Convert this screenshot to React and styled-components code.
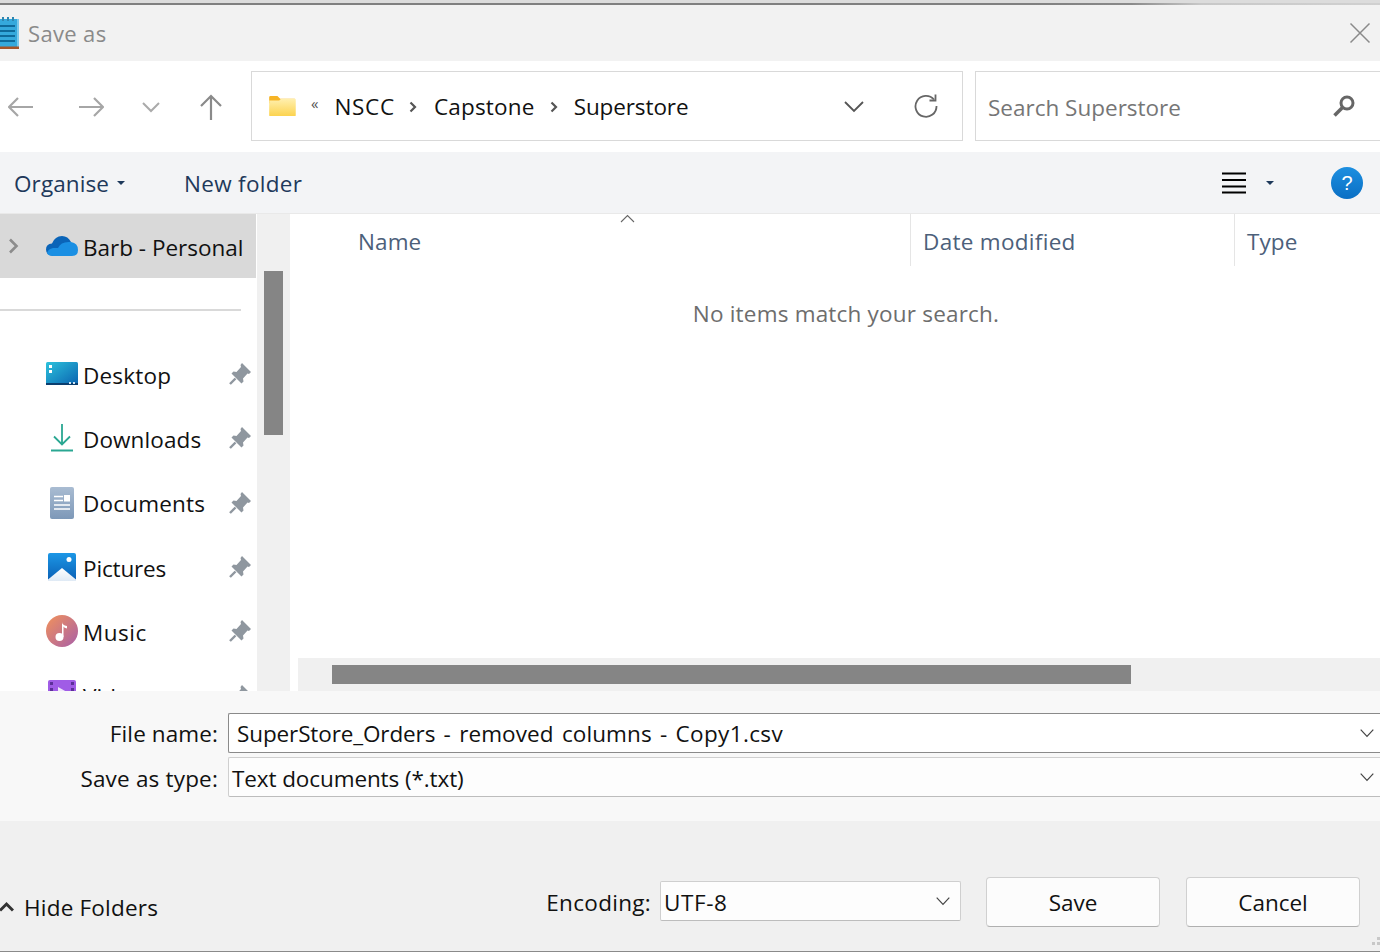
import React from 'react';
import styled, { createGlobalStyle } from 'styled-components';

const Global = createGlobalStyle`
  html, body { margin: 0; padding: 0; background: #fff; }
  body { font-family: "Open Sans", "Noto Sans", sans-serif; color: #111; }
  * { box-sizing: border-box; }
`;

const Dialog = styled.div`
  width: 1380px; height: 952px; overflow: hidden; display: grid;
  grid-template-rows: 5px 56px 91px 62px 477px 130px 131px;
`;
const TopEdge = styled.div`
  background: linear-gradient(#dcdcdc 0 3px, transparent 3px),
    linear-gradient(90deg, #808080 0 75%, #8a8a8a 82%, #c8c8c8 87%, #d0d0d0 100%);
`;
const TitleBar = styled.div`
  background: #f2f2f2; display: flex; align-items: center; justify-content: space-between;
  padding: 0 8px 0 0;
`;
const TitleGroup = styled.div`display: flex; align-items: center; gap: 8px;`;
const TitleText = styled.span`font-size: 22px; color: #8a8a8a; letter-spacing: 0.35px;`;

const NavBar = styled.div`
  background: #fff; display: flex; align-items: center; padding: 0 0 1px 0;
`;
const NavButtons = styled.div`width: 251px; flex: none; display: flex; align-items: center; padding: 2px 0 0 8px;`;
const NavSlot = styled.span`display: flex; width: ${p => p.$w}px; flex: none;`;
const AddressBox = styled.div`
  width: 712px; height: 70px; flex: none; border: 1px solid #d9d9d9; display: flex; align-items: center;
  padding: 0 24px 0 16px;
`;
const Crumbs = styled.div`flex: 1; display: flex; align-items: center;`;
const Crumb = styled.span`font-size: 22.5px; color: #111; letter-spacing: ${p => p.$ls}px;`;
const CrumbSep = styled.span`display: flex; margin: 2px ${p => p.$r}px 0 ${p => p.$l}px;`;
const Back = styled.span`font-size: 15px; color: #555; margin: -6px 16px 0 15px; line-height: 1;`;
const AddrChevron = styled.span`display: flex; margin-top: 1px;`;
const SearchBox = styled.div`
  margin-left: 12px; flex: 1; height: 70px; border: 1px solid #d9d9d9; border-right: 0; display: flex; align-items: center;
  justify-content: space-between; padding: 0 24px 0 12px;
`;
const SearchText = styled.span`font-size: 22.5px; color: #767676; letter-spacing: 0; padding-top: 2px;`;

const ToolBar = styled.div`
  background: #f3f4f6; border-bottom: 1px solid #e9e9e9; display: flex; align-items: center; padding: 1px 17px 0 14px;
`;
const ToolText = styled.span`font-size: 22.5px; color: #1e395b; letter-spacing: ${p => p.$ls}px; margin-left: ${p => p.$ml || 0}px;`;
const Caret = styled.span`
  display: inline-block; width: 0; height: 0; border: 4px solid transparent; border-top: 4px solid #1e395b; border-bottom: 0;
  margin: ${p => p.$m};
`;
const Spacer = styled.div`flex: 1;`;
const HelpDot = styled.span`
  width: 32px; height: 32px; border-radius: 50%; background: linear-gradient(#1d8fe0, #0a6fc4); color: #fff; margin-left: 57px;
  display: flex; align-items: center; justify-content: center; font-size: 20px; font-family: "Liberation Sans", sans-serif;
`;

const Main = styled.div`display: grid; grid-template-columns: 257px 33px 1fr; min-height: 0; overflow: hidden;`;
const Side = styled.div`background: #fff; overflow: hidden; height: 477px;`;
const SelectedRow = styled.div`
  height: 64px; width: 256px; background: #d9d9d9; display: flex; align-items: center; padding-left: 8px;
`;
const ChevronGap = styled.span`width: 27px; flex: none;`;
const Sep = styled.div`height: 2px; width: 241px; background: #d9d9d9; margin: 31px 0 33px;`;
const NavRow = styled.div`
  height: 64.3px; display: grid; grid-template-columns: 83px 1fr 24px; align-items: center; width: 253px;
`;
const IconCell = styled.span`display: flex; justify-content: flex-start; padding: 0 0 4px 46px;`;
const PinCell = styled.span`display: flex; padding-bottom: 4px;`;
const RowText = styled.span`font-size: 22.5px; color: #111; letter-spacing: ${p => p.$ls}px; line-height: 1;`;
const SelectedLabel = styled(RowText)`margin-left: 5px; padding-top: 4px;`;
const SideTrack = styled.div`background: #f0f0f0; padding: 57px 7px 0 7px;`;
const SideThumb = styled.div`width: 19px; height: 164px; background: #858585;`;

const ListPane = styled.div`
  background: #fff; display: grid; grid-template-rows: 52px 1fr 33px; padding-left: 3px; min-height: 0;
`;
const HeaderRow = styled.div`
  position: relative; display: grid; grid-template-columns: 617px 324px 1fr; align-items: stretch;
`;
const HeaderCell = styled.div`
  font-size: 22.5px; color: #4c607a; letter-spacing: ${p => p.$ls}px; border-left: ${p => p.$first ? '0' : '1px solid #e5e5e5'};
  padding-left: ${p => p.$first ? '65px' : '12px'}; display: flex; align-items: center; padding-top: 2px;
`;
const SortMark = styled.span`position: absolute; left: 327px; top: 0; display: flex;`;
const Empty = styled.div`
  text-align: center; font-size: 22.5px; color: #6d6d6d; letter-spacing: 0.2px; padding: 32px 0 0 0; margin-left: 19px;
  line-height: 32px;
`;
const HTrack = styled.div`background: #f0f0f0; margin-left: 5px; padding: 7px 0 0 34px;`;
const HThumb = styled.div`width: 799px; height: 19px; background: #858585;`;

const Form = styled.div`
  background: #f8f8f8; display: grid; grid-template-columns: 218px 1fr; grid-auto-rows: 40px; row-gap: 4px; padding-top: 22px;
  align-items: center; z-index: 1;
`;
const FormLabel = styled.span`font-size: 22.5px; color: #111; text-align: right; letter-spacing: ${p => p.$ls || 0.1}px; padding-top: ${p => p.$dy || 0}px;`;
const Field = styled.div`
  margin-left: 10px; height: 40px; display: flex; align-items: center; justify-content: space-between;
  border: 1px solid ${p => p.$strong ? '#8a8a8a' : '#cfcfcf'}; border-right: 0;
  border-bottom-color: ${p => p.$strong ? '#8a8a8a' : '#bdbdbd'};
  background: ${p => p.$strong ? '#fff' : '#fdfdfd'}; border-radius: 2px 0 0 2px;
  padding: 0 6px 0 ${p => p.$pad}px; font-size: 22.5px; color: #111;
`;
const FieldText = styled.span`letter-spacing: ${p => p.$ls}px; word-spacing: ${p => p.$ws || 0}px; padding-top: ${p => p.$dy || 0}px;`;
const FieldPart = styled.span`letter-spacing: ${p => p.$ls}px;`;

const Footer = styled.div`
  background: #f0f0f0; display: flex; flex-direction: column; min-height: 0; position: relative;
`;
const FooterMain = styled.div`flex: 1; display: flex; align-items: flex-start; padding: 60px 20px 0 0;`;
const HideFolders = styled.div`
  display: flex; align-items: center; gap: 10px; font-size: 22.5px; color: #111; letter-spacing: 0.2px; padding-top: 11px;
`;
const EncLabel = styled.span`font-size: 22.5px; color: #111; letter-spacing: 0.3px; margin: 2px 9px 0 0; line-height: 40px;`;
const EncSelect = styled.div`
  width: 301px; height: 40px; border: 1px solid #cfcfcf; border-bottom-color: #bdbdbd; border-radius: 2px; background: #fdfdfd;
  display: flex; align-items: center; justify-content: space-between; padding: 0 10px 0 3px; font-size: 22.5px; color: #111;
  margin-right: 25px;
`;
const EncText = styled.span`letter-spacing: 0.6px; padding-top: 2px;`;
const Btn = styled.div`
  width: 174px; height: 50px; border: 1px solid #d0d0d0; border-bottom-color: #b0b0b0; border-radius: 4px; background: #fcfcfc;
  display: flex; align-items: center; justify-content: center; font-size: 22.5px; color: #111; margin: -4px 0 0 ${p => p.$ml || 0}px;
`;
const Grip = styled.span`position: absolute; right: 0; bottom: 5px; display: flex;`;
const BottomEdge = styled.div`
  height: 3px; flex: none; border-bottom: 1px solid #8a8a8a;
  background: repeating-linear-gradient(90deg, #777 0 2px, transparent 2px 37px 38px, #777 38px 39px, transparent 39px 58px) 15px 1px / 545px 1px no-repeat;
`;

const NotepadIcon = () => (
  <svg width="20" height="32" viewBox="0 0 20 32" style={{ display: 'block' }}>
    <rect x="0" y="2" width="19" height="28" fill="#35a9dc" />
    <rect x="17" y="2" width="2" height="28" fill="#7cc8ea" />
    <rect x="0" y="29.5" width="19" height="2.5" fill="#a5552a" />
    <path d="M0 9H15M0 14H15M0 19H15M0 24H15" stroke="#0f6a9a" strokeWidth="2" />
    <path d="M3 0v4M8 0v4M13 0v4" stroke="#2f86b0" strokeWidth="2" />
  </svg>
);
const CloseIcon = () => (
  <svg width="24" height="24" viewBox="0 0 24 24"><path d="M2.5 2.5 21.5 21.5M21.5 2.5 2.5 21.5" stroke="#8a8a8a" strokeWidth="1.5" fill="none" /></svg>
);
const ArrowLeft = () => (
  <svg width="26" height="24" viewBox="0 0 26 24"><path d="M1 12H25M10 3 1 12l9 9" stroke="#a6a6a6" strokeWidth="2.2" fill="none" /></svg>
);
const ArrowRight = () => (
  <svg width="26" height="24" viewBox="0 0 26 24"><path d="M25 12H1M16 3l9 9-9 9" stroke="#a6a6a6" strokeWidth="2.2" fill="none" /></svg>
);
const SmallDown = () => (
  <svg width="18" height="12" viewBox="0 0 18 12"><path d="M1 2l8 8 8-8" stroke="#aaa" strokeWidth="2" fill="none" /></svg>
);
const ArrowUp = () => (
  <svg width="24" height="26" viewBox="0 0 24 26"><path d="M12 26V2M2 12 12 2l10 10" stroke="#8a8a8a" strokeWidth="2.2" fill="none" /></svg>
);
const FolderIcon = () => (
  <svg width="28" height="22" viewBox="0 0 30 24" style={{ display: 'block', flex: 'none' }}>
    <defs><linearGradient id="fg" x1="0" y1="0" x2="0" y2="1"><stop offset="0" stopColor="#fff0b0" /><stop offset="1" stopColor="#fcd34f" /></linearGradient></defs>
    <path d="M1 2.5Q1 1 2.5 1H10l3 3h16v5H1Z" fill="#f6b426" />
    <path d="M1 6h11l2-2h15q1 0 1 1v17q0 1-1 1H2q-1 0-1-1Z" fill="url(#fg)" />
  </svg>
);
const CrumbArrow = () => (
  <svg width="8" height="12" viewBox="0 0 8 12" style={{ display: 'block' }}><path d="M1.5 1.5 6 6l-4.5 4.5" stroke="#555" strokeWidth="2.2" fill="none" /></svg>
);
const AddrDown = () => (
  <svg width="20" height="12" viewBox="0 0 20 12" style={{ display: 'block' }}><path d="M1 1l9 9 9-9" stroke="#555" strokeWidth="1.8" fill="none" /></svg>
);
const Refresh = () => (
  <svg width="24" height="24" viewBox="0 0 24 24" style={{ marginLeft: 50 }}>
    <path d="M20 5.5A10.5 10.5 0 1 0 22.5 12" stroke="#666" strokeWidth="1.8" fill="none" />
    <path d="M21.5 0.5V6.5H15.5" stroke="#666" strokeWidth="1.8" fill="none" />
  </svg>
);
const KeyIcon = () => (
  <svg width="24" height="24" viewBox="0 0 24 24">
    <circle cx="15" cy="9" r="6" stroke="#666" strokeWidth="3" fill="none" />
    <path d="M10.5 13.5 2.5 21.5" stroke="#666" strokeWidth="3.5" fill="none" />
  </svg>
);
const ListIcon = () => (
  <svg width="24" height="22" viewBox="0 0 24 22"><path d="M0 1.5H24M0 8H24M0 14.5H24M0 20.5H24" stroke="#000" strokeWidth="2" fill="none" /></svg>
);
const SideChevron = () => (
  <svg width="11" height="16" viewBox="0 0 11 16"><path d="M2 1.5 8.5 8 2 14.5" stroke="#8c8c8c" strokeWidth="2.6" fill="none" /></svg>
);
const CloudIcon = () => (
  <svg width="32" height="22" viewBox="0 0 32 22" style={{ display: 'block', flex: 'none' }}>
    <path d="M7 21Q0 20 0 14.5 0 9 6 8.5 9 1 16 1q6 0 9 6l-12 14Z" fill="#0a64b8" />
    <path d="M25 7q7 1 7 8 0 6-6 6H7q-5 0-6-3 1-4 6-5h5q3-7 13-6Z" fill="#1a8fe3" />
  </svg>
);
const PinIcon = () => (
  <svg width="22" height="22" viewBox="0 0 22 22" style={{ display: 'block' }}>
    <path d="M13 0 22 9 20 11 18.5 10.5 14 15.5 14.5 18.5 12.5 20.5 2.5 10.5 4.5 8.5 7.5 9 12 4 11.5 2Z" fill="#8f979f" />
    <path d="M6.5 15.5 1 21" stroke="#8f979f" strokeWidth="2.4" fill="none" />
  </svg>
);
const DesktopIcon = () => (
  <svg width="32" height="24" viewBox="0 0 32 24" style={{ display: 'block' }}>
    <defs><linearGradient id="dk" x1="0" y1="0" x2="1" y2="1"><stop offset="0" stopColor="#2cc2dc" /><stop offset="1" stopColor="#0a62b0" /></linearGradient></defs>
    <rect width="32" height="23" rx="1.5" fill="url(#dk)" />
    <rect y="21" width="32" height="2" fill="#0b3e6e" />
    <path d="M3 3h3v3H3ZM3 8h3v3H3Z" fill="#fff" />
    <path d="M23 20h2v2h-2ZM27 20h2v2h-2Z" fill="#cfe6f5" />
  </svg>
);
const DownloadIcon = () => (
  <svg width="22" height="28" viewBox="0 0 22 28" style={{ display: 'block', marginLeft: 5 }}>
    <path d="M11 0V20M3 12.5 11 20.5l8-8" stroke="#2aa792" strokeWidth="1.8" fill="none" />
    <path d="M0 26.5H22" stroke="#2aa792" strokeWidth="2" fill="none" />
  </svg>
);
const DocIcon = () => (
  <svg width="24" height="32" viewBox="0 0 24 32" style={{ display: 'block', marginLeft: 4 }}>
    <defs><linearGradient id="dc" x1="0" y1="0" x2="0" y2="1"><stop offset="0" stopColor="#a9bcd2" /><stop offset="1" stopColor="#7d98b8" /></linearGradient></defs>
    <rect width="24" height="32" rx="2" fill="url(#dc)" />
    <path d="M4 9.5h9M4 13.5h9M4 18H20M4 22H20" stroke="#fff" strokeWidth="1.6" fill="none" />
    <rect x="14" y="8" width="6" height="6.5" fill="#fff" />
  </svg>
);
const PicIcon = () => (
  <svg width="28" height="28" viewBox="0 0 28 28" style={{ display: 'block', marginLeft: 2 }}>
    <defs>
      <linearGradient id="pc" x1="0" y1="0" x2="0" y2="1"><stop offset="0" stopColor="#1c97e6" /><stop offset="1" stopColor="#0a5fb4" /></linearGradient>
      <linearGradient id="pm" x1="0" y1="0" x2="0" y2="1"><stop offset="0" stopColor="#ffffff" /><stop offset="1" stopColor="#dfeaf5" /></linearGradient>
    </defs>
    <rect width="28" height="28" rx="2" fill="url(#pc)" />
    <circle cx="21" cy="6.5" r="2.5" fill="#fff" />
    <path d="M0 26.5 14 15l14 11.5V28H0Z" fill="url(#pm)" />
  </svg>
);
const MusicIcon = () => (
  <svg width="32" height="32" viewBox="0 0 32 32" style={{ display: 'block' }}>
    <defs><linearGradient id="mu" x1="0" y1="0" x2="1" y2="1"><stop offset="0" stopColor="#f2925a" /><stop offset="1" stopColor="#a85fa8" /></linearGradient></defs>
    <circle cx="16" cy="16" r="16" fill="url(#mu)" />
    <circle cx="13.5" cy="22" r="4" fill="#fff" />
    <path d="M16 22V7q0 3 5 4v2.5q-3-.5-3.5-2V22Z" fill="#fff" />
  </svg>
);
const VideoIcon = () => (
  <svg width="28" height="32" viewBox="0 0 28 32" style={{ display: 'block', marginLeft: 2 }}>
    <rect width="28" height="32" rx="2" fill="#a05ce6" />
    <path d="M2 2h3v3H2ZM23 2h3v3h-3ZM2 8h3v3H2ZM23 8h3v3h-3Z" fill="#5d2f9a" />
    <path d="M10 7l9 5-9 5Z" fill="#efe5fb" />
  </svg>
);
const FieldDown = () => (
  <svg width="14" height="9" viewBox="0 0 14 9" style={{ display: 'block' }}><path d="M.7.7 7 7.3 13.3.7" stroke="#444" strokeWidth="1.2" fill="none" /></svg>
);
const SortUp = () => (
  <svg width="15" height="9" viewBox="0 0 15 9"><path d="M1 8 7.5 1.5 14 8" stroke="#666" strokeWidth="1.1" fill="none" /></svg>
);
const HideChevron = () => (
  <svg width="14" height="11" viewBox="0 0 14 11" style={{ display: 'block', marginTop: -2 }}><path d="M0 9.5 6.5 3l6.5 6.5" stroke="#333" strokeWidth="3" fill="none" /></svg>
);
const GripIcon = () => (
  <svg width="8" height="10" viewBox="0 0 8 10"><path d="M5 0h3v3H5ZM0 5h3v3H0ZM5 5h3v3H5Z" fill="#c8c8c8" /></svg>
);

const places = [
  ['Desktop', <DesktopIcon />, 0.2],
  ['Downloads', <DownloadIcon />, 0.1],
  ['Documents', <DocIcon />, 0.2],
  ['Pictures', <PicIcon />, -0.15],
  ['Music', <MusicIcon />, 0.5],
  ['Videos', <VideoIcon />, 0.1],
];

export default function App() {
  return (
    <Dialog>
      <Global />
      <TopEdge />
      <TitleBar>
        <TitleGroup>
          <NotepadIcon />
          <TitleText>Save as</TitleText>
        </TitleGroup>
        <CloseIcon />
      </TitleBar>
      <NavBar>
        <NavButtons>
          <NavSlot $w={70}><ArrowLeft /></NavSlot>
          <NavSlot $w={64}><ArrowRight /></NavSlot>
          <NavSlot $w={57}><SmallDown /></NavSlot>
          <NavSlot $w={30}><ArrowUp /></NavSlot>
        </NavButtons>
        <AddressBox>
          <FolderIcon />
          <Back>«</Back>
          <Crumbs>
            <Crumb $ls={0.7}>NSCC</Crumb>
            <CrumbSep $l={14} $r={17}><CrumbArrow /></CrumbSep>
            <Crumb $ls={0.2}>Capstone</Crumb>
            <CrumbSep $l={15} $r={16}><CrumbArrow /></CrumbSep>
            <Crumb $ls={-0.1}>Superstore</Crumb>
          </Crumbs>
          <AddrChevron><AddrDown /></AddrChevron>
          <Refresh />
        </AddressBox>
        <SearchBox>
          <SearchText>Search Superstore</SearchText>
          <KeyIcon />
        </SearchBox>
      </NavBar>
      <ToolBar>
        <ToolText $ls={0.1}>Organise</ToolText>
        <Caret $m="0 0 0 8px" />
        <ToolText $ls={0.3} $ml={59}>New folder</ToolText>
        <Spacer />
        <ListIcon />
        <Caret $m="0 0 0 20px" />
        <HelpDot>?</HelpDot>
      </ToolBar>
      <Main>
        <Side>
          <SelectedRow>
            <SideChevron />
            <ChevronGap />
            <CloudIcon />
            <SelectedLabel $ls={0}>Barb - Personal</SelectedLabel>
          </SelectedRow>
          <Sep />
          {places.map(([name, icon, ls]) => (
            <NavRow key={name}>
              <IconCell>{icon}</IconCell>
              <RowText $ls={ls}>{name}</RowText>
              <PinCell><PinIcon /></PinCell>
            </NavRow>
          ))}
        </Side>
        <SideTrack><SideThumb /></SideTrack>
        <ListPane>
          <HeaderRow>
            <HeaderCell $first $ls={0.1}>Name</HeaderCell>
            <HeaderCell $ls={0.3}>Date modified</HeaderCell>
            <HeaderCell $ls={0.1}>Type</HeaderCell>
            <SortMark><SortUp /></SortMark>
          </HeaderRow>
          <Empty>No items match your search.</Empty>
          <HTrack><HThumb /></HTrack>
        </ListPane>
      </Main>
      <Form>
        <FormLabel>File name:</FormLabel>
        <Field $strong $pad={8}>
          <FieldText $ls={0.1} $ws={2.3}>
            <FieldPart $ls={-0.12}>SuperStore_Orders</FieldPart> - removed columns - <FieldPart $ls={0.35}>Copy1.csv</FieldPart>
          </FieldText>
          <FieldDown />
        </Field>
        <FormLabel $dy={2} $ls={0.18}>Save as type:</FormLabel>
        <Field $pad={3}>
          <FieldText $ls={-0.1} $dy={2}>Text documents (*.txt)</FieldText>
          <FieldDown />
        </Field>
      </Form>
      <Footer>
        <FooterMain>
          <HideFolders><HideChevron />Hide Folders</HideFolders>
          <Spacer />
          <EncLabel>Encoding:</EncLabel>
          <EncSelect><EncText>UTF-8</EncText><FieldDown /></EncSelect>
          <Btn>Save</Btn>
          <Btn $ml={26}>Cancel</Btn>
        </FooterMain>
        <Grip><GripIcon /></Grip>
        <BottomEdge />
      </Footer>
    </Dialog>
  );
}
